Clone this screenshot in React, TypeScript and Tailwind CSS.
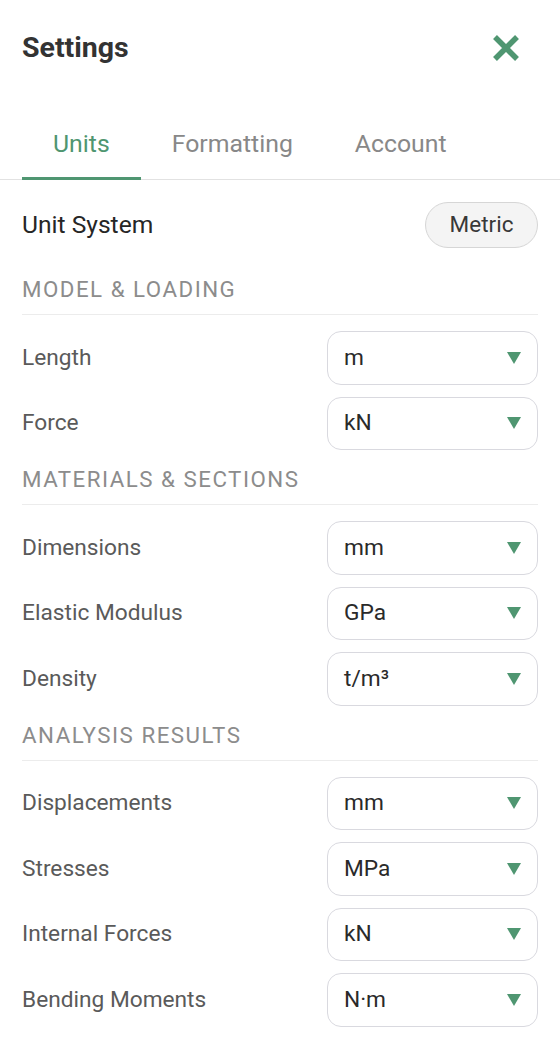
const SECTIONS: { title: string; rows: [string, string][] }[] = [
  {
    title: 'MODEL & LOADING',
    rows: [
      ['Length', 'm'],
      ['Force', 'kN'],
    ],
  },
  {
    title: 'MATERIALS & SECTIONS',
    rows: [
      ['Dimensions', 'mm'],
      ['Elastic Modulus', 'GPa'],
      ['Density', 't/m³'],
    ],
  },
  {
    title: 'ANALYSIS RESULTS',
    rows: [
      ['Displacements', 'mm'],
      ['Stresses', 'MPa'],
      ['Internal Forces', 'kN'],
      ['Bending Moments', 'N·m'],
    ],
  },
];

function Caret() {
  return (
    <svg width="14" height="12" viewBox="0 0 14 12" className="flex-none">
      <path d="M0 0 H14 L7 12 Z" fill="#4f9671" />
    </svg>
  );
}

export default function App() {
  return (
    <div className="min-h-screen bg-white font-['Roboto',sans-serif] text-[#222]">
      <header className="flex h-[96px] items-center justify-between px-[22px]">
        <h1 className="pt-[1px] text-[28.5px] font-bold text-[#333]">Settings</h1>
        <button className="mr-[18px] flex h-[28px] w-[28px] items-center justify-center">
          <svg width="28" height="28" viewBox="0 0 28 28">
            <path d="M3 3 L25 25 M25 3 L3 25" stroke="#4f9671" strokeWidth="5.5" />
          </svg>
        </button>
      </header>

      <nav className="flex border-b border-[#e2e2e2] pl-[22px]">
        {['Units', 'Formatting', 'Account'].map((t, i) => (
          <button
            key={t}
            className={`-mb-px flex h-[84px] items-center px-[31px] pt-[14px] text-[24.8px] ${
              i === 0 ? 'border-b-[3px] border-[#4f9671] text-[#4f9671]' : 'border-b-[3px] border-transparent text-[#888]'
            }`}
          >
            {t}
          </button>
        ))}
      </nav>

      <main className="px-[22px] pb-8">
        <div className="flex items-center justify-between pb-[12px] pt-[22px]">
          <span className="text-[24.6px] text-[#262626]">Unit System</span>
          <button className="h-[46px] w-[113px] rounded-full border border-[#d6d6d6] bg-[#f4f4f4] text-[22.5px] text-[#383838]">
            Metric
          </button>
        </div>

        {SECTIONS.map((s) => (
          <section key={s.title} className="mt-[16px]">
            <div className="border-b border-[#ececec] pb-[12px] text-[22.3px] leading-[26px] tracking-[1.5px] text-[#8c8c8c]">
              {s.title}
            </div>
            <div className="mt-[16px] flex flex-col gap-[12px]">
              {s.rows.map(([label, value]) => (
                <div key={label} className="flex items-center justify-between">
                  <span className="text-[22.7px] text-[#5a5a5a]">{label}</span>
                  <div className="flex h-[53.5px] w-[211px] items-center justify-between rounded-[14px] border border-[#d9d9df] bg-white pl-[16px] pr-[16px]">
                    <span className="text-[22.7px] text-[#2a2a2a]">{value}</span>
                    <Caret />
                  </div>
                </div>
              ))}
            </div>
          </section>
        ))}
      </main>
    </div>
  );
}
